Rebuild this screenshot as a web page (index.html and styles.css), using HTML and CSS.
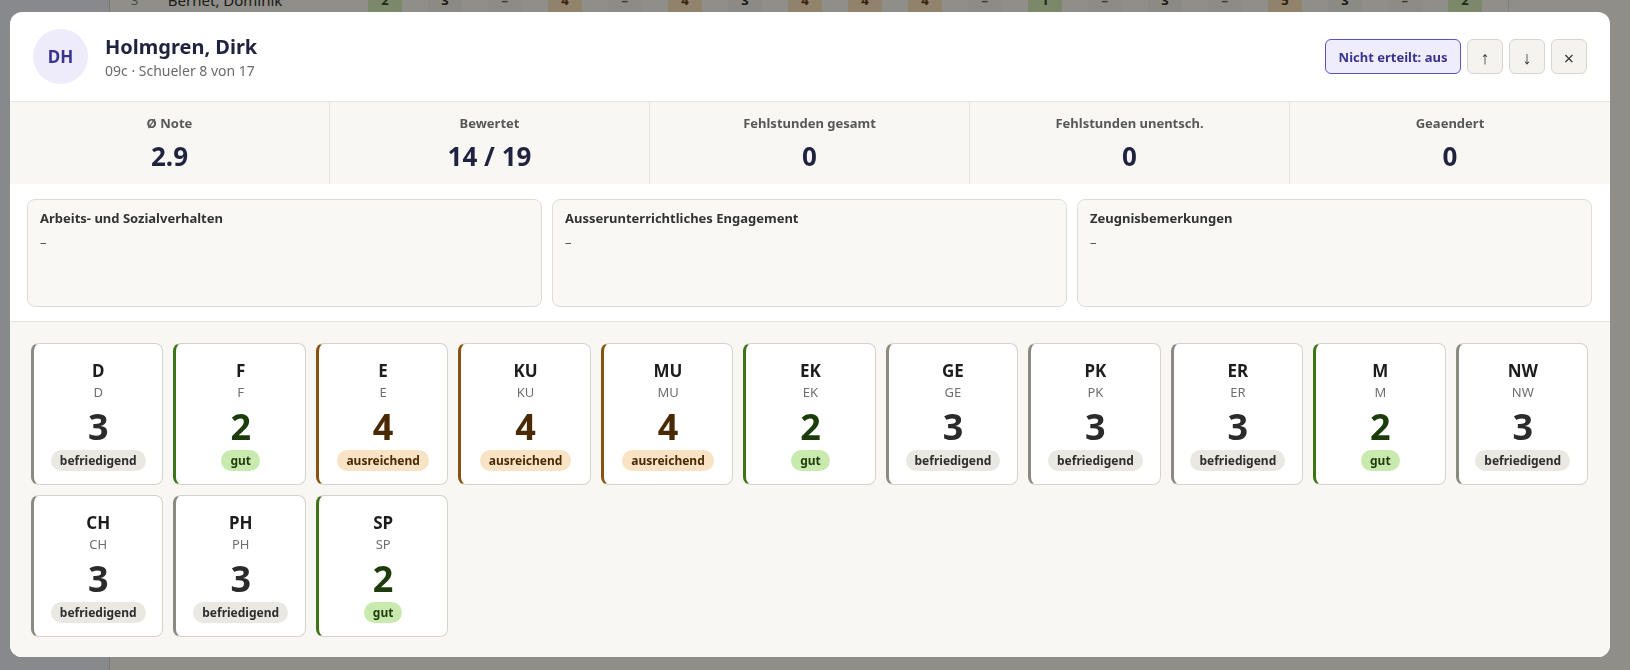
FILE: index.html
```html
<!DOCTYPE html>
<html lang="de">
<head>
    <meta charset="UTF-8">
    <meta name="viewport" content="width=device-width, initial-scale=1.0">
    <title>Notenuebersicht - Holmgren, Dirk</title>
    <link rel="stylesheet" href="styles.css">
</head>
<body>

    <div class="page">
        <aside class="sidebar"></aside>
        <main class="main">
            <div class="grade-row">
                <span class="row-nr">3</span>
                <span class="row-name">Bernet, Dominik</span>
                <span class="cell"><b class="g2">2</b></span>
                <span class="cell"><b class="g3">3</b></span>
                <span class="cell"><b class="g0">–</b></span>
                <span class="cell"><b class="g4">4</b></span>
                <span class="cell"><b class="g0">–</b></span>
                <span class="cell"><b class="g4">4</b></span>
                <span class="cell"><b class="g3">3</b></span>
                <span class="cell"><b class="g4">4</b></span>
                <span class="cell"><b class="g4">4</b></span>
                <span class="cell"><b class="g4">4</b></span>
                <span class="cell"><b class="g0">–</b></span>
                <span class="cell"><b class="g2">1</b></span>
                <span class="cell"><b class="g0">–</b></span>
                <span class="cell"><b class="g3">3</b></span>
                <span class="cell"><b class="g0">–</b></span>
                <span class="cell"><b class="g4">5</b></span>
                <span class="cell"><b class="g3">3</b></span>
                <span class="cell"><b class="g0">–</b></span>
                <span class="cell"><b class="g2">2</b></span>
            </div>
        </main>
    </div>

    <div class="overlay">
        <div class="modal">

            <header class="modal-head">
                <div class="avatar">DH</div>
                <div class="who">
                    <h1>Holmgren, Dirk</h1>
                    <p>09c · Schueler 8 von 17</p>
                </div>
                <div class="actions">
                    <button class="btn-toggle">Nicht erteilt: aus</button>
                    <button class="btn-icon">↑</button>
                    <button class="btn-icon">↓</button>
                    <button class="btn-icon close">×</button>
                </div>
            </header>

            <section class="stats">
                <div class="stat"><span>Ø Note</span><strong>2.9</strong></div>
                <div class="stat"><span>Bewertet</span><strong>14 / 19</strong></div>
                <div class="stat"><span>Fehlstunden gesamt</span><strong>0</strong></div>
                <div class="stat"><span>Fehlstunden unentsch.</span><strong>0</strong></div>
                <div class="stat"><span>Geaendert</span><strong>0</strong></div>
            </section>

            <section class="notes">
                <div class="note"><h3>Arbeits- und Sozialverhalten</h3><p>–</p></div>
                <div class="note"><h3>Ausserunterrichtliches Engagement</h3><p>–</p></div>
                <div class="note"><h3>Zeugnisbemerkungen</h3><p>–</p></div>
            </section>

            <section class="subjects">
                <div class="subject grey"><h4>D</h4><small>D</small><div class="mark">3</div><span class="pill">befriedigend</span></div>
                <div class="subject green"><h4>F</h4><small>F</small><div class="mark">2</div><span class="pill">gut</span></div>
                <div class="subject brown"><h4>E</h4><small>E</small><div class="mark">4</div><span class="pill">ausreichend</span></div>
                <div class="subject brown"><h4>KU</h4><small>KU</small><div class="mark">4</div><span class="pill">ausreichend</span></div>
                <div class="subject brown"><h4>MU</h4><small>MU</small><div class="mark">4</div><span class="pill">ausreichend</span></div>
                <div class="subject green"><h4>EK</h4><small>EK</small><div class="mark">2</div><span class="pill">gut</span></div>
                <div class="subject grey"><h4>GE</h4><small>GE</small><div class="mark">3</div><span class="pill">befriedigend</span></div>
                <div class="subject grey"><h4>PK</h4><small>PK</small><div class="mark">3</div><span class="pill">befriedigend</span></div>
                <div class="subject grey"><h4>ER</h4><small>ER</small><div class="mark">3</div><span class="pill">befriedigend</span></div>
                <div class="subject green"><h4>M</h4><small>M</small><div class="mark">2</div><span class="pill">gut</span></div>
                <div class="subject grey"><h4>NW</h4><small>NW</small><div class="mark">3</div><span class="pill">befriedigend</span></div>
                <div class="subject grey"><h4>CH</h4><small>CH</small><div class="mark">3</div><span class="pill">befriedigend</span></div>
                <div class="subject grey"><h4>PH</h4><small>PH</small><div class="mark">3</div><span class="pill">befriedigend</span></div>
                <div class="subject green"><h4>SP</h4><small>SP</small><div class="mark">2</div><span class="pill">gut</span></div>
            </section>

        </div>
    </div>

</body>
</html>
```

FILE: styles.css
```css
* { margin: 0; padding: 0; box-sizing: border-box; font-family: 'Noto Sans', sans-serif; }
body { background: #f3f2ee; color: #1f2340; height: 670px; overflow: hidden; }

/* page behind the dialog */
.page { display: flex; height: 100%; }
.sidebar { width: 110px; background: #e4eaf4; border-right: 1px solid #c9ccd2; }
.main { flex: 1; }
.grade-row {
    display: flex; align-items: center; height: 30px; margin-top: -15px;
    width: 1399px; background: #f4f3ef; border-right: 1px solid #d9d7d0; font-size: 15px;
}
.row-nr { width: 58px; padding-left: 21px; color: #777; font-size: 13px; }
.row-name { width: 201px; color: #222; }
.cell { width: 60.3px; display: flex; }
.cell b { width: 34px; height: 30px; display: flex; align-items: center; justify-content: center; font-size: 13px; }
.g2 { background: #cfe8b7; color: #1f3d0c; }
.g3 { background: #ecebe6; color: #222; }
.g4 { background: #f6dcb9; color: #4a2a05; }
.g0 { background: #eeede8; color: #555; }

.overlay {
    position: fixed; top: 0; left: 0; right: 0; bottom: 0;
    background: rgba(22, 20, 14, 0.45); padding: 12px 20px 13px 10px;
}
.modal { background: #fff; border-radius: 12px; overflow: hidden; height: 645px; display: flex; flex-direction: column; }

/* header */
.modal-head { display: flex; align-items: center; height: 90px; flex-shrink: 0; padding: 0 23px 0 23px; border-bottom: 1px solid #e6e4de; }
.avatar {
    width: 55px; height: 55px; border-radius: 50%; background: #eeecfb; color: #3b348f;
    display: flex; align-items: center; justify-content: center; font-weight: bold; font-size: 17px;
}
.who { flex: 1; margin-left: 17px; }
.who h1 { font-size: 20px; line-height: 26px; font-weight: bold; color: #1f2340; }
.who p { font-size: 14px; line-height: 19px; color: #6a6a6a; margin-top: 1px; }
.actions { display: flex; gap: 6px; align-items: center; }
.actions button { height: 35px; border-radius: 6px; cursor: pointer; font-family: 'Noto Sans', sans-serif; }
.btn-toggle { width: 136px; background: #efedfc; border: 1px solid #5b51c6; color: #3b348f; font-weight: bold; font-size: 13px; }
.btn-icon { width: 36px; background: #f4f3ef; border: 1px solid #d8d5cd; color: #333; font-size: 18px; }
.btn-icon.close { font-size: 18px; padding-top: 3px; }

/* stats */
.stats { display: grid; grid-template-columns: repeat(5, 1fr); background: #f8f7f4; height: 82px; flex-shrink: 0; }
.stat { display: flex; flex-direction: column; align-items: center; padding-top: 12px; border-right: 1px solid #e6e4de; }
.stat:last-child { border-right: none; }
.stat span { font-size: 13px; line-height: 18px; font-weight: bold; color: #585858; }
.stat strong { font-size: 26px; line-height: 32px; margin-top: 8px; color: #1f2340; }

/* notes */
.notes { display: grid; grid-template-columns: repeat(3, 1fr); gap: 10px; padding: 15px 18px 14px 17px; border-bottom: 1px solid #e6e4de; flex-shrink: 0; }
.note { height: 108px; background: #f9f8f5; border: 1px solid #dfdcd3; border-radius: 8px; padding: 9px 12px; }
.note h3 { font-size: 13px; line-height: 18px; font-weight: bold; color: #333; }
.note p { font-size: 13px; line-height: 18px; color: #555; margin-top: 6px; }

/* subjects */
.subjects {
    flex: 1; background: #f8f7f4; padding: 21px 22px 21px 21px;
    display: grid; grid-template-columns: repeat(auto-fill, minmax(130px, 1fr)); gap: 10px; align-content: start;
}
.subject {
    height: 142px; background: #fff; border: 1px solid #d6d3ca; border-left: 3px solid #8a8a80; border-radius: 8px;
    display: flex; flex-direction: column; align-items: center; padding-top: 16px;
}
.subject h4 { font-size: 17px; line-height: 22px; font-weight: bold; color: #1d1d1d; }
.subject small { font-size: 13px; line-height: 18px; color: #6f6f6f; margin-top: 1px; }
.mark { font-size: 36px; line-height: 40px; font-weight: bold; margin-top: 6px; }
.pill { font-size: 12px; line-height: 21px; font-weight: bold; padding: 0 9px; border-radius: 11px; margin-top: 3px; }

.grey .mark { color: #2b2b2b; }
.grey .pill { background: #eae8e2; color: #2e2e2e; }
.green { border-left-color: #3e7418; }
.green .mark { color: #1c3d0b; }
.green .pill { background: #c9eaae; color: #1f3d0c; }
.brown { border-left-color: #8a5210; }
.brown .mark { color: #4a2a05; }
.brown .pill { background: #f9e3c5; color: #4a2a05; }
```
